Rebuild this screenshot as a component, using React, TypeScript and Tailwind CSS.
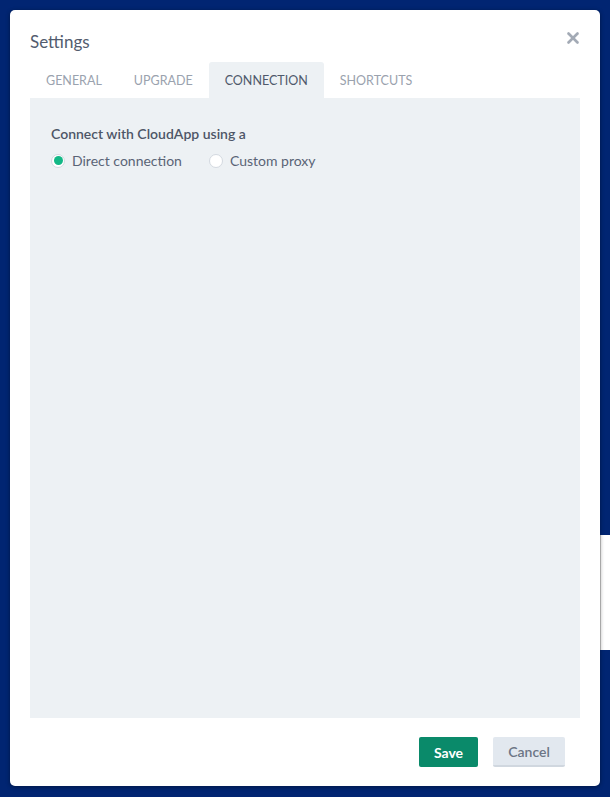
import { X } from "lucide-react";

const tabs = ["GENERAL", "UPGRADE", "CONNECTION", "SHORTCUTS"];

const Radio = ({ checked, label }: { checked: boolean; label: string }) => (
  <label className="flex items-center gap-[7px] cursor-pointer">
    <span className="w-[14px] h-[14px] rounded-full bg-white border border-[#d3d9e0] flex items-center justify-center">
      {checked && <span className="w-[9px] h-[9px] rounded-full bg-[#13b886]"></span>}
    </span>
    <span className="text-[14px] text-[#5a6476]">{label}</span>
  </label>
);

export default function App() {
  return (
    <div
      className="w-full h-screen bg-[#012572] relative overflow-hidden"
      style={{ fontFamily: "Lato, 'Noto Sans', sans-serif" }}
    >
      {/* window peeking out behind the dialog */}
      <div className="absolute left-[598px] top-[535px] w-[20px] h-[115px] bg-white border-l-[3px] border-[#c9c9c9]"></div>

      <div className="absolute left-[10px] top-[10px] w-[590px] h-[776px] bg-white rounded-[5px] shadow-[0_1px_4px_rgba(0,0,0,0.4)] flex flex-col px-[20px]">
        <div className="flex items-start justify-between pt-[20px]">
          <h1 className="text-[17px] text-[#525c6e] leading-none pt-[3px]">Settings</h1>
          <X className="w-[18px] h-[18px] text-[#a3aab5] mr-[-2px] mt-[-1px]" strokeWidth={3.5} />
        </div>

        <div className="flex mt-[12px] h-[36px]">
          {tabs.map((t) => (
            <div
              key={t}
              className={
                t === "CONNECTION"
                  ? "px-[16px] pt-[2px] flex items-center bg-[#edf1f4] rounded-t-[3px] text-[12.5px] text-[#4f596b]"
                  : "px-[16px] pt-[2px] flex items-center text-[12.5px] text-[#9aa2ae]"
              }
            >
              {t}
            </div>
          ))}
        </div>

        <div className="bg-[#edf1f4] h-[620px] px-[21px] pt-[25px]">
          <p className="text-[14px] font-semibold text-[#4d5667]">Connect with CloudApp using a</p>
          <div className="flex items-center gap-[27px] mt-[6px]">
            <Radio checked label="Direct connection" />
            <Radio checked={false} label="Custom proxy" />
          </div>
        </div>

        <div className="flex justify-end gap-[15px] mt-[19px] pr-[15px]">
          <button className="w-[59px] h-[30px] rounded-[2px] bg-[#0a8a6a] text-white text-[14px] font-bold">
            Save
          </button>
          <button className="w-[72px] h-[30px] rounded-[2px] bg-[#e2e8ef] border-b-2 border-[#d0d7df] text-[#6c7585] text-[14px] font-semibold">
            Cancel
          </button>
        </div>
      </div>
    </div>
  );
}
